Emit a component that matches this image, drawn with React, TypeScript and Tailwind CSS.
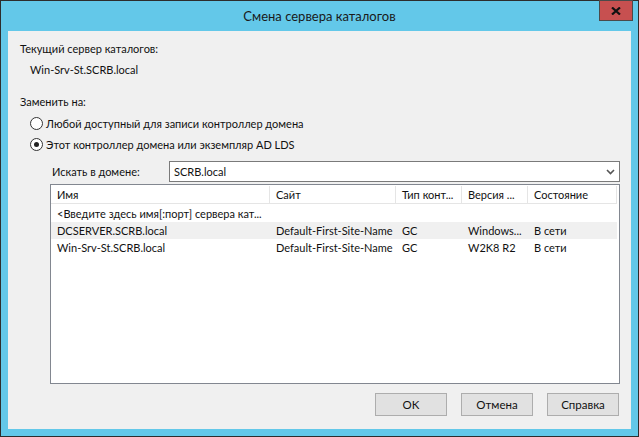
import React from "react";

const cols = [
  { label: "Имя", w: "w-[219px]" },
  { label: "Сайт", w: "w-[126px]" },
  { label: "Тип конт...", w: "w-[66px]" },
  { label: "Версия ...", w: "w-[66px]" },
  { label: "Состояние", w: "w-[89px]" },
];

const rows = [
  ["DCSERVER.SCRB.local", "Default-First-Site-Name", "GC", "Windows...", "В сети"],
  ["Win-Srv-St.SCRB.local", "Default-First-Site-Name", "GC", "W2K8 R2", "В сети"],
];

function Radio({ checked, label }: { checked?: boolean; label: string }) {
  return (
    <div className="flex items-center h-[17px] ml-[10px]">
      <span className="w-[13px] h-[13px] rounded-full border border-[#333] bg-white flex items-center justify-center">
        {checked && <span className="w-[5px] h-[5px] rounded-full bg-[#222]" />}
      </span>
      <span className="ml-[3px]">{label}</span>
    </div>
  );
}

function Button({ children }: { children: React.ReactNode }) {
  return (
    <button className="w-[72px] h-[23px] border border-[#adadad] bg-[#e1e1e1] text-[11.5px] text-[#111]">
      {children}
    </button>
  );
}

export default function App() {
  return (
    <div
      className="w-[639px] h-[437px] bg-[#63c8e9] border border-[#2d2d2d] flex flex-col text-[11px] leading-[15px] text-[#111]"
      style={{ fontFamily: 'Lato, "Noto Sans", sans-serif' }}
    >
      <div className="relative h-[30px] flex items-center justify-center">
        <span className="text-[13px] text-[#1a1a1a] mt-[1px]">Смена сервера каталогов</span>
        <div className="absolute right-[5px] top-[-1px] w-[34px] h-[21px] bg-[#c75050] border border-[#4a4a4a] flex items-center justify-center">
          <svg width="10" height="8" viewBox="0 0 10 8">
            <path d="M1 0.5 L9 7.5 M9 0.5 L1 7.5" stroke="#111" strokeWidth="2.2" />
          </svg>
        </div>
      </div>

      <div className="flex-1 mx-[7px] mb-[7px] bg-[#f0f0f0] pl-[12px] pr-[11px] flex flex-col">
        <div className="mt-[10px]">Текущий сервер каталогов:</div>
        <div className="mt-[6px] ml-[10px]">Win-Srv-St.SCRB.local</div>
        <div className="mt-[17px]">Заменить на:</div>
        <div className="mt-[6px]">
          <Radio label="Любой доступный для записи контроллер домена" />
        </div>
        <div className="mt-[4px]">
          <Radio checked label="Этот контроллер домена или экземпляр AD LDS" />
        </div>

        <div className="mt-[8px] ml-[32px] flex items-center">
          <span className="w-[117px]">Искать в домене:</span>
          <div className="flex-1 h-[21px] border border-[#7a7a7a] bg-white flex items-center pl-[4px] pr-[4px]">
            <span className="flex-1">SCRB.local</span>
            <svg width="9" height="6" viewBox="0 0 9 6">
              <path d="M1 1 L4.5 4.5 L8 1" stroke="#555" strokeWidth="1.6" fill="none" />
            </svg>
          </div>
        </div>

        <div className="mt-[2px] ml-[30px] h-[200px] border border-[#828790] bg-white flex flex-col">
          <div className="flex h-[19px] mt-[1px]">
            {cols.map((c) => (
              <div
                key={c.label}
                className={`${c.w} h-[18px] border-r border-b border-[#e5e5e5] pl-[6px] flex items-center whitespace-nowrap overflow-hidden`}
              >
                {c.label}
              </div>
            ))}
          </div>
          <div className="h-[17px] flex items-center pl-[6px] whitespace-nowrap">
            &lt;Введите здесь имя[:порт] сервера кат...
          </div>
          {rows.map((r, i) => (
            <div key={i} className={`flex h-[17px] ${i === 0 ? "bg-[#f0f0f0]" : ""} w-[566px]`}>
              {r.map((cell, j) => (
                <div key={j} className={`${cols[j].w} pl-[6px] flex items-center whitespace-nowrap overflow-hidden`}>
                  {cell}
                </div>
              ))}
            </div>
          ))}
        </div>

        <div className="mt-[9px] flex justify-end gap-[14px] pr-[1px]">
          <Button>OK</Button>
          <Button>Отмена</Button>
          <Button>Справка</Button>
        </div>
      </div>
    </div>
  );
}
